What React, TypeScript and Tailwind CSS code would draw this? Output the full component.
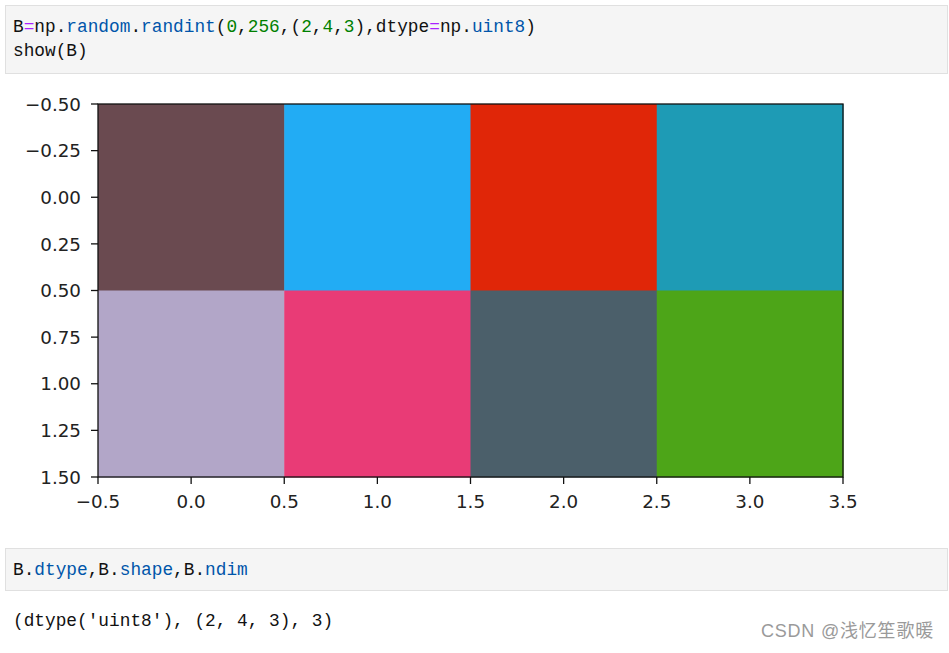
const mono = { fontFamily: '"Liberation Mono", "DejaVu Sans Mono", monospace' }

const BLUE = 'text-[#0055aa]'
const GREEN = 'text-[#008000]'
const PURPLE = 'text-[#aa22ff]'

const cells = [
  ['#6a4a50', '#22acf4', '#e02608', '#1e9bb5'],
  ['#b2a6c8', '#e93b76', '#4b5f6a', '#4da518'],
]

// axes box in page coords
const X0 = 98
const X1 = 843
const Y0 = 104
const Y1 = 477

function Plot() {
  const cw = (X1 - X0) / 4
  const ch = (Y1 - Y0) / 2
  const yTicks = ['\u22120.50', '\u22120.25', '0.00', '0.25', '0.50', '0.75', '1.00', '1.25', '1.50']
  const xTicks = ['\u22120.5', '0.0', '0.5', '1.0', '1.5', '2.0', '2.5', '3.0', '3.5']
  return (
    <svg width={949} height={474} viewBox="0 74 949 474" className="block">
      {cells.map((row, r) =>
        row.map((c, i) => (
          <rect key={`${r}-${i}`} x={X0 + i * cw} y={Y0 + r * ch} width={cw + 0.5} height={ch + 0.5} fill={c} />
        ))
      )}
      <rect x={X0} y={Y0} width={X1 - X0} height={Y1 - Y0} fill="none" stroke="#111" strokeWidth={1.3} />
      <g fontFamily='"DejaVu Sans", sans-serif' fontSize={18.3} fill="#222">
        {yTicks.map((t, i) => {
          const y = Y0 + (i * (Y1 - Y0)) / 8
          return (
            <g key={t}>
              <line x1={X0 - 7} x2={X0} y1={y} y2={y} stroke="#111" strokeWidth={1.3} />
              <text x={81} y={y + 6.7} textAnchor="end">{t}</text>
            </g>
          )
        })}
        {xTicks.map((t, i) => {
          const x = X0 + (i * (X1 - X0)) / 8
          return (
            <g key={t}>
              <line x1={x} x2={x} y1={Y1} y2={Y1 + 7} stroke="#111" strokeWidth={1.3} />
              <text x={x} y={507.5} textAnchor="middle">{t}</text>
            </g>
          )
        })}
      </g>
    </svg>
  )
}

export default function App() {
  return (
    <div className="relative w-[949px] h-[653px] bg-white overflow-hidden">
      <div
        className="ml-[5px] mr-[1px] mt-[5px] border border-[#e0e0e0] bg-[#f5f5f5] pl-[7px] pt-[9px] pb-[10px] text-[17.8px] leading-[24px] text-[#111] whitespace-pre"
        style={mono}
      >
        <div>
          B<span className={PURPLE}>=</span>np.<span className={BLUE}>random</span>.<span className={BLUE}>randint</span>(
          <span className={GREEN}>0</span>,<span className={GREEN}>256</span>,(<span className={GREEN}>2</span>,
          <span className={GREEN}>4</span>,<span className={GREEN}>3</span>),dtype<span className={PURPLE}>=</span>np.
          <span className={BLUE}>uint8</span>)
        </div>
        <div>show(B)</div>
      </div>

      <Plot />

      <div
        className="ml-[5px] mr-[1px] border border-[#e0e0e0] bg-[#f5f5f5] pl-[7px] pt-[9px] pb-[8px] text-[17.8px] leading-[24px] text-[#111] whitespace-pre"
        style={mono}
      >
        B.<span className={BLUE}>dtype</span>,B.<span className={BLUE}>shape</span>,B.<span className={BLUE}>ndim</span>
      </div>

      <div className="pl-[13px] pt-[18px] text-[17.8px] leading-[24px] text-[#111] whitespace-pre" style={mono}>
        (dtype('uint8'), (2, 4, 3), 3)
      </div>

      <div
        className="absolute right-[15px] bottom-[8px] text-[18px] tracking-[0.8px] text-[#9a9a9a] [text-shadow:0_0_1px_#fff]"
        style={{ fontFamily: '"Liberation Sans", "Noto Sans CJK SC", sans-serif' }}
      >
        CSDN @浅忆笙歌暖
      </div>
    </div>
  )
}
